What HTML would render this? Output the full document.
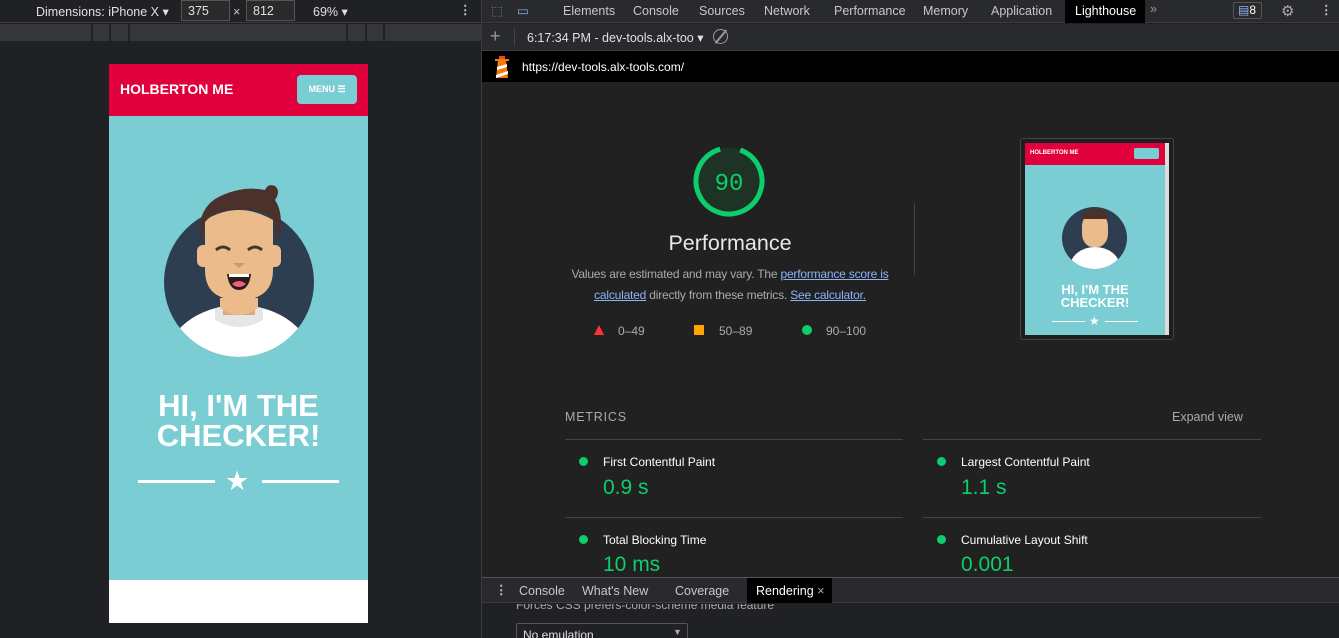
<!DOCTYPE html>
<html style="overflow:hidden;height:638px"><head><meta charset="utf-8"><style>
*{box-sizing:border-box;margin:0;padding:0}
body{width:1339px;height:638px;overflow:hidden;background:#202124;font-family:"Liberation Sans",sans-serif;position:relative;color:#e8eaed}
.a{position:absolute}
.t{font-size:12.5px;color:#c8c8c8;white-space:nowrap}
</style></head><body>
<!-- left panel -->
<div class="a" style="left:0;top:0;width:481px;height:23px;background:#202124;border-bottom:1px solid #3c3c3c"></div>
<div class="a t" style="left:36px;top:4px;color:#e0e0e0">Dimensions: iPhone X ▾</div>
<div class="a" style="left:181px;top:0;width:49px;height:21px;border:1px solid #555;background:#2a2a2a"></div>
<div class="a t" style="left:188px;top:4px;color:#e0e0e0">375</div>
<div class="a t" style="left:233px;top:5px">×</div>
<div class="a" style="left:246px;top:0;width:49px;height:21px;border:1px solid #555;background:#2a2a2a"></div>
<div class="a t" style="left:253px;top:4px;color:#e0e0e0">812</div>
<div class="a t" style="left:313px;top:4px;color:#e0e0e0">69% ▾</div>
<div class="a t" style="left:459px;top:2px;font-weight:bold">⋮</div>
<div class="a" style="left:0;top:24px;width:481px;height:17px;background:#35363a"></div>
<div class="a" style="left:91px;top:24px;width:2px;height:17px;background:#202124"></div>
<div class="a" style="left:109px;top:24px;width:2px;height:17px;background:#202124"></div>
<div class="a" style="left:128px;top:24px;width:2px;height:17px;background:#202124"></div>
<div class="a" style="left:346px;top:24px;width:2px;height:17px;background:#202124"></div>
<div class="a" style="left:365px;top:24px;width:2px;height:17px;background:#202124"></div>
<div class="a" style="left:383px;top:24px;width:2px;height:17px;background:#202124"></div>
<!-- device -->
<div class="a" style="left:109px;top:64px;width:259px;height:52px;background:#e0003c"></div>
<div class="a" style="left:120px;top:81px;font-size:14px;font-weight:bold;color:#fff">HOLBERTON ME</div>
<div class="a" style="left:297px;top:75px;width:60px;height:29px;background:#7acdd3;border-radius:4px;color:#fff;font-size:9px;font-weight:bold;text-align:center;line-height:29px">MENU ☰</div>
<div class="a" style="left:109px;top:116px;width:259px;height:464px;background:#7acdd3"></div>
<div class="a" style="left:109px;top:580px;width:259px;height:43px;background:#fff"></div>
<svg class="a" style="left:150px;top:180px" width="180" height="190" viewBox="0 0 180 190">
<defs><clipPath id="c"><circle cx="89" cy="102" r="75"/></clipPath></defs>
<circle cx="89" cy="102" r="75" fill="#2c3e50"/>
<g clip-path="url(#c)"><ellipse cx="89" cy="185" rx="75" ry="60" fill="#fff"/>
<path d="M65 128 h48 v12 q-24 14 -48 0z" fill="#e6e6e6"/></g>
<rect x="73" y="105" width="32" height="30" fill="#d9a87e"/>
<path d="M70 128 q19 14 38 0 v-10 h-38z" fill="#ebbb8c"/>
<rect x="47" y="65" width="16" height="22" rx="6" fill="#ebbb8c"/>
<rect x="115" y="65" width="16" height="22" rx="6" fill="#ebbb8c"/>
<path d="M55 40 q34 -20 68 0 v50 q0 30 -34 30 q-34 0 -34 -30z" fill="#ebbb8c"/>
<path d="M50 62 q-4 -30 15 -43 q25 -14 50 -9 q3 -7 10 -4 q6 5 0 14 q10 15 3 42 l-3 -20 q-10 -15 -40 -12 q-20 0 -30 12z" fill="#4b312b"/>
<path d="M66 70 q7 -6 14 0 M98 70 q7 -6 14 0" stroke="#4b312b" stroke-width="3" fill="none"/>
<path d="M83 83 h12 l-6 5z" fill="#c99a6e"/>
<path d="M77 94 h24 q-2 16 -12 16 q-10 0 -12 -16z" fill="#2b1d1a"/>
<path d="M82 104 q7 -6 14 0 q-7 6 -14 0z" fill="#f35f7a"/>
<rect x="79" y="94" width="20" height="3" fill="#fff"/>
</svg>
<div class="a" style="left:109px;top:391px;width:259px;text-align:center;color:#fff;font-weight:bold;font-size:31px;line-height:30px">HI, I'M THE<br>CHECKER!</div>
<div class="a" style="left:138px;top:480px;width:77px;height:3px;background:#fff"></div>
<div class="a" style="left:262px;top:480px;width:77px;height:3px;background:#fff"></div>
<div class="a" style="left:225px;top:466px;font-size:27px;color:#fff;line-height:30px">★</div>
<!-- divider -->
<div class="a" style="left:481px;top:0;width:1px;height:638px;background:#3c3c3c"></div>
<!-- right tabs -->
<div class="a" style="left:482px;top:0;width:857px;height:23px;background:#292a2d;border-bottom:1px solid #3c3c3c"></div>
<div class="a t" style="left:491px;top:3px;color:#888">⬚</div>
<div class="a t" style="left:517px;top:3px;color:#8ab4f8">▭</div>
<div class="a t" style="left:563px;top:4px">Elements</div>
<div class="a t" style="left:633px;top:4px">Console</div>
<div class="a t" style="left:699px;top:4px">Sources</div>
<div class="a t" style="left:764px;top:4px">Network</div>
<div class="a t" style="left:834px;top:4px">Performance</div>
<div class="a t" style="left:923px;top:4px">Memory</div>
<div class="a t" style="left:991px;top:4px">Application</div>
<div class="a" style="left:1065px;top:0;width:80px;height:23px;background:#000"></div>
<div class="a t" style="left:1075px;top:4px;color:#fff">Lighthouse</div>
<div class="a t" style="left:1150px;top:2px;color:#999">»</div>
<div class="a" style="left:1233px;top:2px;width:29px;height:17px;border:1px solid #555;border-radius:2px;background:#2a2a2a;font-size:12px;color:#fff;padding-left:4px"><span style="color:#8ab4f8">▤</span>8</div>
<div class="a t" style="left:1281px;top:2px;color:#aaa;font-size:15px">⚙</div>
<div class="a t" style="left:1320px;top:2px;font-weight:bold">⋮</div>
<div class="a" style="left:482px;top:24px;width:857px;height:27px;background:#292a2d;border-bottom:1px solid #3c3c3c"></div>
<div class="a t" style="left:490px;top:26px;font-size:18px;color:#999">+</div>
<div class="a" style="left:514px;top:28px;width:1px;height:18px;background:#444"></div>
<div class="a t" style="left:527px;top:30px;color:#e0e0e0">6:17:34 PM - dev-tools.alx-too ▾</div>
<div class="a" style="left:713px;top:29px;width:15px;height:15px;border:1.5px solid #999;border-radius:50%"></div>
<div class="a" style="left:720px;top:28px;width:1.5px;height:17px;background:#999;transform:rotate(40deg)"></div>
<div class="a" style="left:482px;top:51px;width:857px;height:31px;background:#000"></div>
<svg class="a" style="left:492px;top:54px" width="20" height="26" viewBox="0 0 20 26"><path d="M7 2h6v4H7z" fill="#f44336"/><path d="M6 6h8l2 18H4z" fill="#f57c00"/><path d="M5 13l10-3v3L5 16zM4 21l12-4v3L4 24z" fill="#fff"/><rect x="3" y="5" width="14" height="2" fill="#f57c00"/></svg>
<div class="a t" style="left:522px;top:60px;color:#fff;font-size:12px">https://dev-tools.alx-tools.com/</div>
<div class="a" style="left:482px;top:82px;width:857px;height:495px;background:#212121"></div>
<!-- gauge -->
<svg class="a" style="left:692px;top:144px" width="74" height="74" viewBox="0 0 74 74"><circle cx="37" cy="37" r="33" fill="#1e3326"/><circle cx="37" cy="37" r="33" fill="none" stroke="#0cce6b" stroke-width="5" stroke-dasharray="186.6 207.3" transform="rotate(-70 37 37)"/><text x="37" y="46" text-anchor="middle" font-family="Liberation Mono,monospace" font-size="24" fill="#0cce6b">90</text></svg>
<div class="a" style="left:560px;top:231px;width:340px;text-align:center;font-size:21.5px;color:#e8e8e8">Performance</div>
<div class="a" style="left:568px;top:264px;width:324px;text-align:center;font-size:12px;color:#aaa;line-height:21px;letter-spacing:-0.2px">Values are estimated and may vary. The <span style="color:#8ab4f8;text-decoration:underline">performance score is calculated</span> directly from these metrics. <span style="color:#8ab4f8;text-decoration:underline">See calculator.</span></div>
<div class="a" style="left:594px;top:325px;width:0;height:0;border-left:5px solid transparent;border-right:5px solid transparent;border-bottom:10px solid #f33"></div>
<div class="a t" style="left:618px;top:324px;color:#aaa;font-size:12px">0–49</div>
<div class="a" style="left:694px;top:325px;width:10px;height:10px;background:#ffa400"></div>
<div class="a t" style="left:719px;top:324px;color:#aaa;font-size:12px">50–89</div>
<div class="a" style="left:802px;top:325px;width:10px;height:10px;border-radius:50%;background:#0cce6b"></div>
<div class="a t" style="left:826px;top:324px;color:#aaa;font-size:12px">90–100</div>
<div class="a" style="left:914px;top:203px;width:1px;height:72px;background:#444"></div>
<!-- thumbnail -->
<div class="a" style="left:1020px;top:138px;width:154px;height:202px;border:1px solid #444;border-radius:3px;background:#1e1e1e"></div>
<div class="a" style="left:1025px;top:143px;width:140px;height:192px;background:#7acdd3"></div>
<div class="a" style="left:1025px;top:143px;width:140px;height:22px;background:#e0003c"></div>
<div class="a" style="left:1165px;top:143px;width:4px;height:192px;background:#ddd"></div>
<div class="a" style="left:1030px;top:150px;font-size:6px;font-weight:bold;color:#fff">HOLBERTON ME</div>
<div class="a" style="left:1134px;top:148px;width:25px;height:11px;background:#7acdd3;border-radius:2px"></div>
<div class="a" style="left:1062px;top:207px;width:65px;height:62px;border-radius:50%;background:#2c3e50;overflow:hidden"><div style="position:absolute;left:8px;top:40px;width:50px;height:40px;border-radius:50%;background:#fff"></div><div style="position:absolute;left:20px;top:6px;width:26px;height:34px;border-radius:40%;background:#ebbb8c"></div><div style="position:absolute;left:20px;top:2px;width:26px;height:10px;border-radius:8px 8px 0 0;background:#4b312b"></div></div>
<div class="a" style="left:1025px;top:283px;width:140px;text-align:center;font-size:13px;font-weight:bold;color:#fff;line-height:13px">HI, I'M THE<br>CHECKER!</div>
<div class="a" style="left:1052px;top:321px;width:33px;height:1px;background:#fff"></div>
<div class="a" style="left:1105px;top:321px;width:33px;height:1px;background:#fff"></div>
<div class="a" style="left:1089px;top:314px;font-size:12px;color:#fff">★</div>
<!-- metrics -->
<div class="a" style="left:565px;top:410px;font-size:12.5px;color:#aaa;letter-spacing:0.8px">METRICS</div>
<div class="a" style="left:1172px;top:410px;font-size:12.5px;color:#aaa">Expand view</div>
<div class="a" style="left:565px;top:439px;width:338px;height:1px;background:#444"></div>
<div class="a" style="left:923px;top:439px;width:338px;height:1px;background:#444"></div>
<div class="a" style="left:565px;top:517px;width:338px;height:1px;background:#444"></div>
<div class="a" style="left:923px;top:517px;width:338px;height:1px;background:#444"></div>
<div class="a" style="left:579px;top:457px;width:9px;height:9px;border-radius:50%;background:#0cce6b"></div>
<div class="a" style="left:937px;top:457px;width:9px;height:9px;border-radius:50%;background:#0cce6b"></div>
<div class="a" style="left:579px;top:535px;width:9px;height:9px;border-radius:50%;background:#0cce6b"></div>
<div class="a" style="left:937px;top:535px;width:9px;height:9px;border-radius:50%;background:#0cce6b"></div>
<div class="a" style="left:603px;top:455px;font-size:12px;color:#fff">First Contentful Paint</div>
<div class="a" style="left:961px;top:455px;font-size:12px;color:#fff">Largest Contentful Paint</div>
<div class="a" style="left:603px;top:533px;font-size:12px;color:#fff">Total Blocking Time</div>
<div class="a" style="left:961px;top:533px;font-size:12px;color:#fff">Cumulative Layout Shift</div>
<div class="a" style="left:603px;top:476px;font-size:21px;color:#0cce6b">0.9 s</div>
<div class="a" style="left:961px;top:476px;font-size:21px;color:#0cce6b">1.1 s</div>
<div class="a" style="left:603px;top:553px;font-size:21px;color:#0cce6b">10 ms</div>
<div class="a" style="left:961px;top:553px;font-size:21px;color:#0cce6b">0.001</div>
<!-- drawer -->
<div class="a" style="left:482px;top:577px;width:857px;height:26px;background:#292a2d;border-top:1px solid #555;border-bottom:1px solid #3c3c3c"></div>
<div class="a t" style="left:495px;top:582px;font-weight:bold">⋮</div>
<div class="a t" style="left:519px;top:584px">Console</div>
<div class="a t" style="left:582px;top:584px">What's New</div>
<div class="a t" style="left:675px;top:584px">Coverage</div>
<div class="a" style="left:747px;top:578px;width:85px;height:25px;background:#000"></div>
<div class="a t" style="left:756px;top:584px;color:#fff">Rendering <span style="color:#aaa">×</span></div>
<div class="a" style="left:482px;top:604px;width:857px;height:34px;background:#202124;overflow:hidden">
<div class="a t" style="left:34px;top:-6px;color:#aaa;font-size:12px">Forces CSS prefers-color-scheme media feature</div>
<div class="a" style="left:34px;top:19px;width:172px;height:22px;border:1px solid #555;border-radius:2px"></div>
<div class="a t" style="left:41px;top:24px;color:#e0e0e0;font-size:12px">No emulation</div>
<div class="a t" style="left:191px;top:23px;color:#aaa;font-size:9px">▼</div>
</div>
</body></html>
